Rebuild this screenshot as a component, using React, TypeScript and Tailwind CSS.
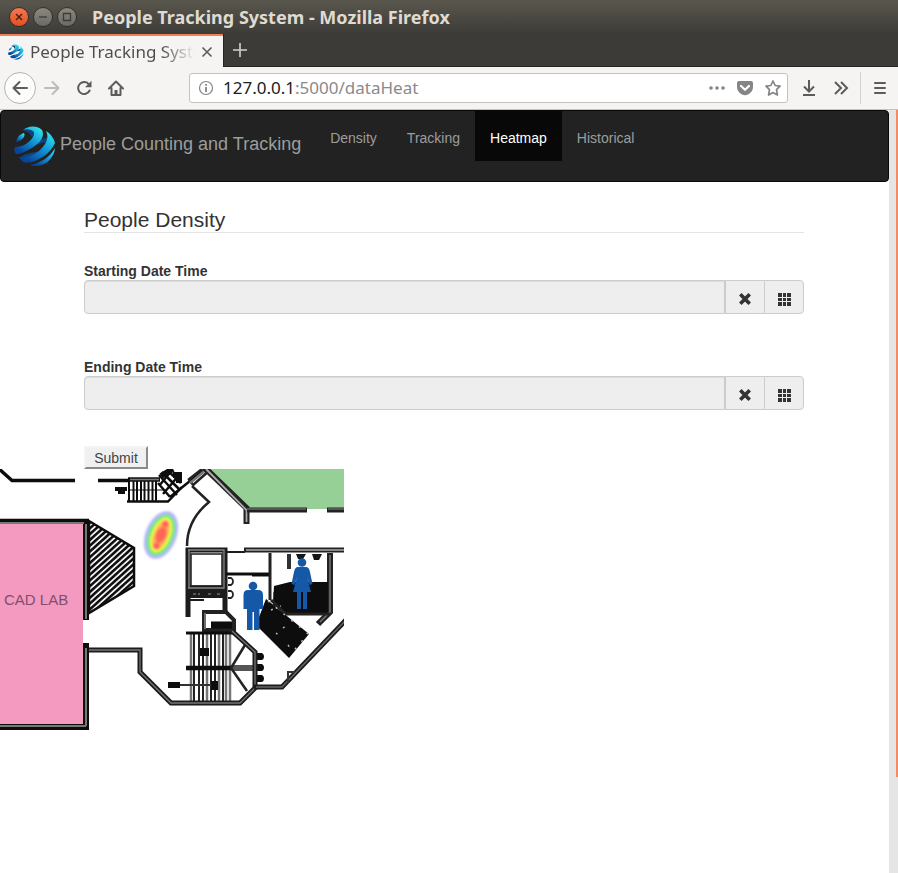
import React from "react";

const NAV_ITEMS = ["Density", "Tracking", "Heatmap", "Historical"];

function Globe({ className, id }: { className: string; id: string }) {
  return (
    <svg viewBox="0 0 42 42" className={className} aria-hidden="true">
      <defs>
        <linearGradient id={id} x1="0.85" y1="0.05" x2="0.2" y2="0.9">
          <stop offset="0" stopColor="#2be0ea" />
          <stop offset="0.45" stopColor="#1598d8" />
          <stop offset="1" stopColor="#06459a" />
        </linearGradient>
      </defs>
      <path d="M9 5C13 3 19 4 20 8L18 13C17 8 13 7 9 5ZM25 16C29 13 32 13 35 12L32 18C29 17 27 18 23 20ZM6 33C11 28 18 28 26 26C19 32 12 34 6 33Z" fill="#0d4480" />
      <g fill={`url(#${id})`}>
        <path d="M9 5C14 1 22 0 28 5C31 11 27 18 16 24C11 27 6 29 2 29C0 26 0 24 1 22C9 22 15 18 19 12C21 8 20 6 17 5C14 4 11 4 9 5Z" />
        <path d="M32 6C37 9 40 14 41 18C38 25 31 32 21 36C16 38 11 38 8 36L5 32C15 33 22 29 27 24C33 18 35 12 32 6Z" />
        <path d="M41 23C40 33 32 41 22 41C19 41 17 40 16 40C27 38 36 32 41 23Z" />
        <path d="M2 17C3 12 6 9 10 8C12 11 8 16 2 17Z" />
      </g>
    </svg>
  );
}

function TitleBar() {
  return (
    <header className="flex h-[34px] items-center bg-linear-to-b from-[#59574d] to-[#3d3b37] pl-[9px]">
      <div className="flex gap-1">
        <button aria-label="Close window" className="grid size-5 place-items-center rounded-full border border-[#33312c] bg-linear-to-b from-[#f4784e] to-[#e4501f]">
          <svg viewBox="0 0 10 10" className="size-2.5" stroke="#4a2416" strokeWidth="1.5"><path d="M2 2L8 8M8 2L2 8" /></svg>
        </button>
        <button aria-label="Minimize window" className="grid size-5 place-items-center rounded-full border border-[#33312c] bg-linear-to-b from-[#8a887f] to-[#6c6a63]">
          <svg viewBox="0 0 10 10" className="size-2.5" stroke="#3c3b37" strokeWidth="1.3"><path d="M1 5H9" /></svg>
        </button>
        <button aria-label="Maximize window" className="grid size-5 place-items-center rounded-full border border-[#33312c] bg-linear-to-b from-[#8a887f] to-[#6c6a63]">
          <svg viewBox="0 0 10 10" className="size-2.5" fill="none" stroke="#3c3b37" strokeWidth="1.3"><path d="M1.5 1.5H8.5V8.5H1.5Z" /></svg>
        </button>
      </div>
      <h1 className="ml-[15px] text-[18px] font-bold whitespace-nowrap text-[#dfdbd2]">
        People Tracking System - Mozilla Firefox
      </h1>
    </header>
  );
}

function TabStrip() {
  return (
    <div className="flex h-[33px] bg-[#3c3b37]">
      <div className="flex w-[223px] items-center border-t-2 border-[#f0825a] bg-[#f5f4f2] pl-2">
        <Globe id="favicon" className="size-4 shrink-0" />
        <span className="ml-1.5 w-[165px] overflow-hidden bg-linear-to-r from-[#4c4c4c] from-80% to-transparent bg-clip-text text-[17px] whitespace-nowrap text-transparent">
          People Tracking System
        </span>
        <button aria-label="Close tab" className="ml-1 grid size-4 place-items-center">
          <svg viewBox="0 0 12 12" className="size-3" stroke="#5c5c5c" strokeWidth="1.6"><path d="M1.5 1.5L10.5 10.5M10.5 1.5L1.5 10.5" /></svg>
        </button>
      </div>
      <button aria-label="New tab" className="grid w-[33px] place-items-center border-b border-l border-[#252420]">
        <svg viewBox="0 0 14 14" className="size-3.5" stroke="#d5d2c9" strokeWidth="1.6"><path d="M7 0V14M0 7H14" /></svg>
      </button>
      <div className="flex-1 border-b border-[#252420]" />
    </div>
  );
}

function Toolbar() {
  return (
    <div className="flex h-[43px] items-center border-b border-[#c4c2bf] bg-[#f5f4f2] pl-1">
      <button aria-label="Back" className="grid size-8 place-items-center rounded-full border border-[#b5b3b0] bg-[#fcfcfb]">
        <svg viewBox="0 0 16 16" className="size-4" fill="none" stroke="#5c5c5c" strokeWidth="2" strokeLinecap="round" strokeLinejoin="round"><path d="M15 8H1.5M7.5 2L1.5 8L7.5 14" /></svg>
      </button>
      <button aria-label="Forward" className="ml-2 grid size-4 place-items-center">
        <svg viewBox="0 0 16 16" className="size-4" fill="none" stroke="#bcbbb9" strokeWidth="2" strokeLinecap="round" strokeLinejoin="round"><path d="M1 8H14.5M8.5 2L14.5 8L8.5 14" /></svg>
      </button>
      <button aria-label="Reload" className="ml-4 grid size-4 place-items-center">
        <svg viewBox="0 0 16 16" className="size-4" fill="none" stroke="#5c5c5c" strokeWidth="2"><path d="M13 4.5A6 6 0 1 0 13.6 10.5" strokeLinecap="round" /><path d="M15.5 .8V7.3H9Z" fill="#5c5c5c" stroke="none" /></svg>
      </button>
      <button aria-label="Home" className="ml-4 grid size-4 place-items-center">
        <svg viewBox="0 0 16 16" className="size-4" fill="none" stroke="#5c5c5c" strokeWidth="2" strokeLinejoin="round" strokeLinecap="round"><path d="M1 8.5L8 1.5L15 8.5M3.5 8V15H12.5V8" /><path d="M8 14.5V10" strokeWidth="3" strokeLinecap="butt" /></svg>
      </button>
      <div className="ml-[65px] flex h-[30px] flex-1 items-center rounded-[3px] border border-[#c4c2bf] bg-white px-2 text-[#8a8a8a]">
        <svg viewBox="0 0 16 16" className="size-4 shrink-0" fill="none" stroke="#858585" strokeWidth="1.2"><circle cx="8" cy="8" r="6.5" /><path d="M8 7V12M8 4V5.8" strokeWidth="1.8" /></svg>
        <div className="relative ml-[9px] h-6 flex-1 text-[17px] leading-6">
          <input aria-label="Address" defaultValue="127.0.0.1:5000/dataHeat" className="w-full bg-transparent text-transparent caret-gray-700 outline-none" />
          <span aria-hidden="true" className="pointer-events-none absolute inset-0"><span className="text-[#202020]">127.0.0.1</span>:5000/dataHeat</span>
        </div>
        <button aria-label="Page actions" className="grid size-4 place-items-center">
          <svg viewBox="0 0 16 16" className="size-4" fill="#858585"><circle cx="2" cy="8" r="1.8" /><circle cx="8" cy="8" r="1.8" /><circle cx="14" cy="8" r="1.8" /></svg>
        </button>
        <button aria-label="Save to Pocket" className="ml-3 grid size-4 place-items-center">
          <svg viewBox="0 0 16 16" className="size-4" fill="#858585"><path d="M2 1H14Q16 1 16 3V7Q16 12 11 14.4Q8 16 5 14.4Q0 12 0 7V3Q0 1 2 1Z" /><path d="M4 6L8 9.8L12 6" fill="none" stroke="#fff" strokeWidth="2.2" strokeLinecap="round" strokeLinejoin="round" /></svg>
        </button>
        <button aria-label="Bookmark this page" className="ml-3 -mr-0.5 grid size-4 place-items-center">
          <svg viewBox="0 0 16 16" className="size-4" fill="none" stroke="#858585" strokeWidth="1.7" strokeLinejoin="round"><path d="M8 1L10.2 5.5L15 6.2L11.5 9.7L12.4 15L8 12.5L3.6 15L4.5 9.7L1 6.2L5.8 5.5Z" /></svg>
        </button>
      </div>
      <button aria-label="Downloads" className="ml-[13px] grid size-4 place-items-center">
        <svg viewBox="0 0 16 16" className="size-4" fill="none" stroke="#5c5c5c" strokeWidth="2"><path d="M8 0V11M3 6.5L8 11.5L13 6.5M2 15H14" /></svg>
      </button>
      <button aria-label="More tools" className="ml-4 grid size-4 place-items-center">
        <svg viewBox="0 0 16 16" className="size-4" fill="none" stroke="#5c5c5c" strokeWidth="2"><path d="M2 2L8 8L2 14M8 2L14 8L8 14" /></svg>
      </button>
      <div className="ml-[11px] h-8 w-px bg-[#d5d3d0]" />
      <button aria-label="Open menu" className="mr-2.5 ml-[11px] grid size-4 place-items-center">
        <svg viewBox="0 0 16 16" className="size-4" stroke="#5c5c5c" strokeWidth="2"><path d="M3 3H13M3 8H13M3 13H13" strokeLinecap="round" /></svg>
      </button>
    </div>
  );
}

function Navbar() {
  return (
    <nav className="flex min-h-[72px] rounded border border-[#080808] bg-[#222]">
      <a href="#home" className="flex items-center pr-3.5 pl-[13px] text-[18px] leading-5 whitespace-nowrap text-[#9d9d9d]">
        <Globe id="brand" className="mr-1 size-[42px]" />
        <span className="pb-1">People Counting and Tracking</span>
      </a>
      <ul className="flex items-start">
        {NAV_ITEMS.map((item) => (
          <li key={item}>
            <a
              href={"#" + item.toLowerCase()}
              className={
                "block px-[15px] pt-[17px] pb-[13px] text-sm " +
                (item === "Heatmap" ? "bg-[#080808] text-white" : "text-[#9d9d9d]")
              }
            >
              {item}
            </a>
          </li>
        ))}
      </ul>
    </nav>
  );
}

function DateField({ id, label }: { id: string; label: string }) {
  return (
    <div className="text-sm">
      <label htmlFor={id} className="block leading-5 font-bold text-[#333]">{label}</label>
      <div className="-mt-px flex h-[34px]">
        <input
          id={id}
          readOnly
          className="min-w-0 flex-1 rounded-l border border-[#ccc] bg-[#eee] px-3 shadow-[inset_0_1px_1px_rgba(0,0,0,0.075)]"
        />
        <button type="button" aria-label={"Clear " + label} className="grid w-[39px] place-items-center border-y border-l border-[#ccc] bg-[#eee] pt-1">
          <svg viewBox="0 0 12 12" className="size-3" stroke="#333" strokeWidth="3.6"><path d="M1.3 1.3L10.7 10.7M10.7 1.3L1.3 10.7" /></svg>
        </button>
        <button type="button" aria-label={"Choose " + label} className="grid w-10 place-items-center rounded-r border border-[#ccc] bg-[#eee] pt-1">
          <svg viewBox="0 0 13 13" className="size-[13px]" fill="#333"><path d="M0 0H4V4H0ZM5 0H8V4H5ZM9 0H13V4H9ZM0 5H4V8H0ZM5 5H8V8H5ZM9 5H13V8H9ZM0 9H4V13H0ZM5 9H8V13H5ZM9 9H13V13H9Z" /></svg>
        </button>
      </div>
    </div>
  );
}

function FloorPlan() {
  return (
    <svg viewBox="0 469 344 262" className="block h-[262px] w-[344px]" fill="none" role="img" aria-label="Floor plan heat map">
      <defs>
        <pattern id="hatch" width="4.3" height="4.3" patternUnits="userSpaceOnUse" patternTransform="rotate(-42)">
          <rect width="4.3" height="4.3" fill="#f0f0f0" />
          <rect width="4.3" height="2.5" fill="#0c0c0c" />
        </pattern>
        <filter id="scaled" x="0" y="0" width="100%" height="100%"><feGaussianBlur stdDeviation="0.5" /></filter>
        <filter id="soft" x="-20%" y="-20%" width="140%" height="140%"><feGaussianBlur stdDeviation="0.9" /></filter>
      </defs>

      {/* coloured rooms */}
      <path d="M206 469H344V509H247Z" fill="#97d097" />
      <path d="M0 522H83V726H0Z" fill="#f49ac1" />

      <g filter="url(#scaled)">
        {/* CAD lab walls */}
        <g stroke="#111" strokeWidth="6">
          <path d="M0 521H89" strokeWidth="4.5" />
          <path d="M86 520V620M86 643V730M-4 727H89" />
        </g>
        <path d="M86 524V619M86 648V726M-4 726H86M0 523H84" stroke="#777" strokeWidth="2" />
        <path d="M89 521L134 548V586L89 613Z" fill="url(#hatch)" stroke="#111" strokeWidth="2.5" />

        {/* north corridor and stairs */}
        <g stroke="#111" strokeWidth="3.5">
          <path d="M-2 468L12 480.5H75M98 480.5H128" />
          <path d="M115 489H127M118 492H125" strokeWidth="4" />
          <path d="M128 479.500H160" strokeWidth="4.500" />
          <path d="M127 501.500H168L182 487" strokeWidth="2.5" />
          <path d="M129 480V502M133.500 480V502M137 480V502M141 480V502M144.500 480V502M148.500 480V502M152.500 480V502M156 480V502" strokeWidth="2" />
          <path d="M128 490H165" strokeWidth="1.2" />
          <path d="M159 475L177 495M162 472L180 490M167 470L181 483M158 483L170 497M163 494L180 474M159 486L172 470M170 497L205 469" strokeWidth="2.5" />
          <path d="M173 475H179V483" strokeWidth="6" />
          <path d="M161 476L173 469" strokeWidth="6" />
        </g>
        <path d="M130 479.500H159" stroke="#777" strokeWidth="1.500" />
        <g stroke="#222" strokeWidth="2.5">
          <path d="M188 480L202 469M193 485L210 470M189 480L194 486M192 486L209 502Q187 520 187 546" />
        </g>
        <path d="M190 483L207 469" stroke="#777" strokeWidth="2.5" />
        <path d="M205 468L246.500 508V524" stroke="#222" strokeWidth="6" />
        <path d="M206 469L246.500 510V522" stroke="#aaa" strokeWidth="1.8" />
        <path d="M247 510H307M327 510H348" stroke="#222" strokeWidth="5" />
        <path d="M247 509H306M328 509H348" stroke="#666" strokeWidth="1.5" />

        {/* lift shaft */}
        <g stroke="#1b1b1b">
          <path d="M188 617V550H225V611" strokeWidth="5" />
          <path d="M188 588H226" strokeWidth="5" />
          <path d="M190 594H226" strokeWidth="8" />
          <path d="M189 550V588M188 550H224V588H188" stroke="#888" strokeWidth="1.3" />
          <path d="M191 554H222V586H191Z" strokeWidth="1.5" />
          <path d="M193 594H200M208 594H213M217 594H222" stroke="#999" strokeWidth="1.2" strokeDasharray="3 2" />
          <path d="M190 600H204M226 552H245" strokeWidth="2" />
        </g>

        {/* washrooms */}
        <path d="M244 550H348" stroke="#222" strokeWidth="5" />
        <path d="M246 550H348" stroke="#888" strokeWidth="1.8" />
        <path d="M226 574H270M252 575H270" stroke="#111" strokeWidth="3" />
        <path d="M270 553V600M275 592V604" stroke="#222" strokeWidth="3" />
        <path d="M330 553V612L318 624" stroke="#222" strokeWidth="6" />
        <path d="M330 555V612L320 622" stroke="#777" strokeWidth="1.5" />
        <path d="M274 586L290 582H328V613H285L273 605Z" fill="#080808" />
        <path d="M271 600L286 614H330" stroke="#222" strokeWidth="3" />
        <path d="M289 554V569" stroke="#333" strokeWidth="4" />
        <path d="M296 554H306L303 559H298ZM312 554H322L319 560H314Z" fill="#151515" />
        <path d="M228 578h3a4 4 0 0 1 0 7h-3M228 591h3a4 4 0 0 1 0 7h-3" stroke="#222" strokeWidth="1.8" />
        <path d="M266 599L309 634L289 658L256 625Z" fill="#080808" />
        <path d="M268 601L308 634L290 655M271 610L281 606M283 628L291 622M276 633L282 638M288 645L291 649" stroke="#bbb" strokeWidth="1.5" strokeDasharray="2 8" />

        {/* lower staircase */}
        <path d="M204 630V612H226L234 620V630Z" stroke="#222" strokeWidth="4" />
        <path d="M205 613V629" stroke="#888" strokeWidth="1.5" />
        <path d="M211 625H232" stroke="#080808" strokeWidth="7" />
        <path d="M191 634V703M207 634V703M219 634V703M226 634V703M230 634V703" stroke="#777" strokeWidth="2.5" />
        <path d="M194 634V703M199 634V703M203 634V703M211 634V703M215 634V703M223 634V703" stroke="#222" strokeWidth="2" />
        <path d="M186 633H234" stroke="#111" strokeWidth="3" />
        <path d="M186 668H232" stroke="#080808" strokeWidth="4.5" />
        <path d="M232 668H253" stroke="#555" strokeWidth="6" />
        <path d="M245 645L231 668L247 691" stroke="#222" strokeWidth="2.5" />
        <path d="M170 685H216" stroke="#333" strokeWidth="2" />
        <path d="M168 682H180V688H168ZM211 681H218V690H211ZM200 648H209V656H200Z" fill="#111" />
        <path d="M257 653h5a4 4 0 0 1 0 7h-5zM257 664h5a4 4 0 0 1 0 7h-5zM257 675h5a4 4 0 0 1 0 7h-5z" fill="#111" />
        <path d="M89 650H140V672L171 703H240L255 688V652L232 631" stroke="#1b1b1b" strokeWidth="5" />
        <path d="M89 650H140V672L171 703H240L255 688V652L232 631" stroke="#777" strokeWidth="1.3" />
        <path d="M254 687H282L346 620" stroke="#1b1b1b" strokeWidth="5" />
        <path d="M256 687H282L346 620" stroke="#666" strokeWidth="1.4" />
        <path d="M288 683V672H295" stroke="#333" strokeWidth="2" />

        {/* washroom signs */}
        <g fill="#1458a8">
          <circle cx="253" cy="586" r="4.3" />
          <path d="M248 590H258Q263 590 263 595V609H259.500V630H254V612H252.500V630H247V609H243.500V595Q243.500 590 248 590Z" />
          <circle cx="302" cy="562.500" r="4.3" />
          <path d="M298 567H306Q309 567 310 572L312.500 584L309.500 585L307 577L311 592H307V609H303V592H301V609H297V592H293L297 577L294.500 585L291.500 584L294 572Q295 567 298 567Z" />
        </g>
      </g>

      <text x="4" y="605" fill="#804e68" className="font-['Liberation_Sans',Arial,sans-serif] text-[15px]">CAD LAB</text>

      {/* heat spot */}
      <g filter="url(#soft)" transform="rotate(22 161 535)">
        <ellipse cx="161" cy="535" rx="15.500" ry="25" fill="#b4b4fb" />
        <ellipse cx="161" cy="535" rx="12.500" ry="21.500" fill="#66ee6c" />
        <ellipse cx="161" cy="535" rx="9.500" ry="18.500" fill="#f2f450" />
        <ellipse cx="161" cy="535" rx="7" ry="15.500" fill="#ffb050" />
        <ellipse cx="161" cy="535" rx="5" ry="8.500" fill="#ff6658" />
        <circle cx="161" cy="523" r="3.200" fill="#ff5e5e" />
        <circle cx="161" cy="547" r="3.200" fill="#ff5e5e" />
      </g>
    </svg>
  );
}

export default function App() {
  return (
    <div className="flex min-h-screen flex-col bg-white font-['Noto_Sans',sans-serif]">
      <TitleBar />
      <TabStrip />
      <Toolbar />
      <div className="flex flex-1 font-['Liberation_Sans',Arial,sans-serif]">
        <main className="min-w-0 flex-1">
          <Navbar />
          <form className="mx-auto mt-5 max-w-[751px] pr-4 pl-[15px]" onSubmit={(e) => e.preventDefault()}>
            <h2 className="mb-7 border-b border-[#e5e5e5] pt-1.5 text-[21px] leading-6 text-[#333]">People Density</h2>
            <div className="flex flex-col gap-[43px]">
              <DateField id="start" label="Starting Date Time" />
              <DateField id="end" label="Ending Date Time" />
            </div>
            <button type="submit" className="mt-9 block h-[23px] w-16 border-2 border-t-[#f4f4f4] border-r-[#8a8a8a] border-b-[#8a8a8a] border-l-[#f4f4f4] bg-[#f0f0f0] text-sm leading-5 text-[#444]">
              Submit
            </button>
          </form>
          <FloorPlan />
        </main>
        <div className="flex w-[9px] flex-col items-end bg-[#e5e5e5]">
          <div className="h-[667px] w-0.5 bg-[#f28c66]" />
        </div>
      </div>
    </div>
  );
}
